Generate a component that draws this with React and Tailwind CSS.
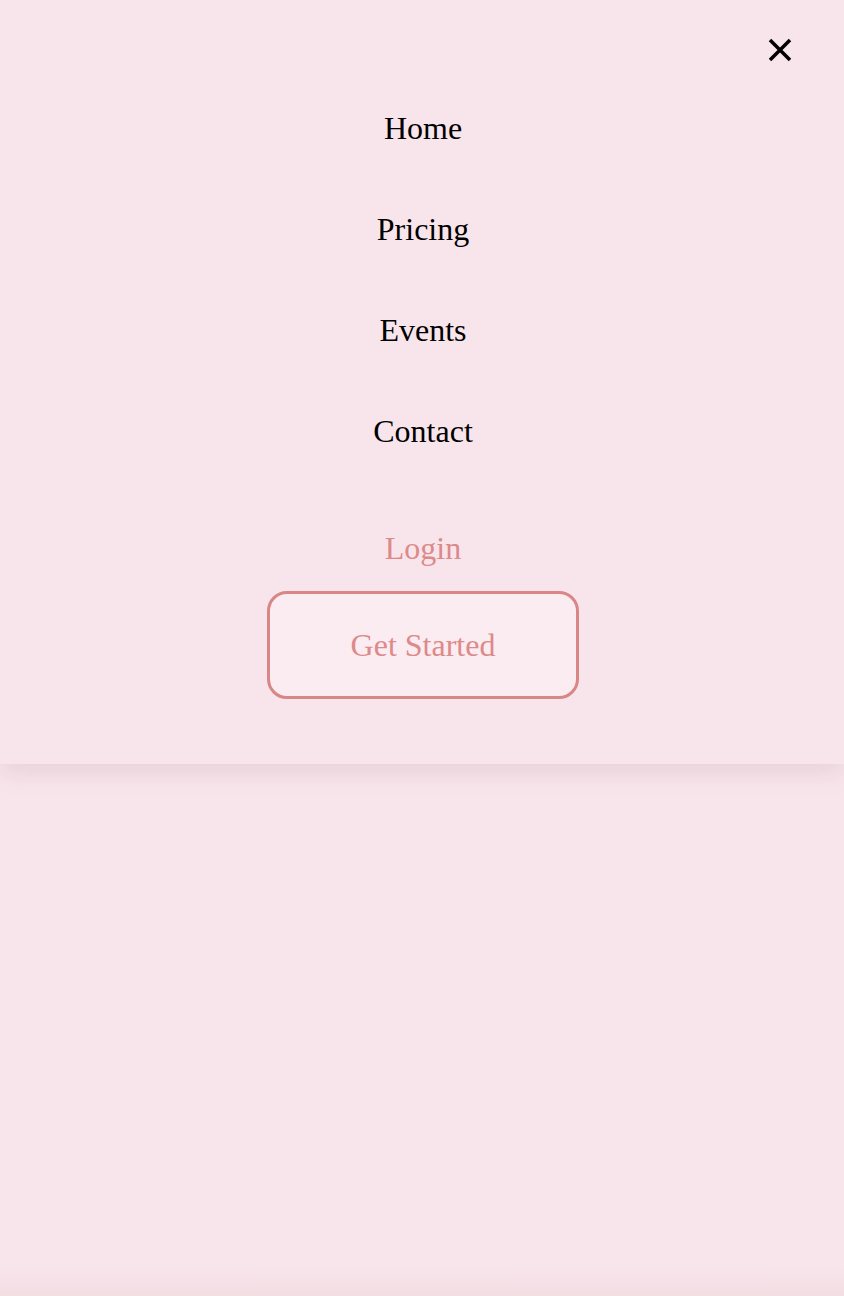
import { useState } from "react";

const links = ["Home", "Pricing", "Events", "Contact"];

const CloseIcon = () => (
    <svg width="24" height="24" viewBox="0 0 24 24" fill="none" stroke="#000" strokeWidth="3.5" strokeLinecap="butt">
        <path d="M2 2 L22 22 M22 2 L2 22" />
    </svg>
);

const App = () => {
    const [open, setOpen] = useState(true);

    return (
        <div className="h-[1296px] flex flex-col bg-[#f8e5eb]" style={{ fontFamily: '"Liberation Serif", "Times New Roman", serif' }}>
            <div className="relative bg-[#f8e5eb] shadow-[0_8px_24px_rgba(120,60,80,0.12)] pt-[104px] pb-[65px] pl-[2px] z-10">
                <button onClick={() => setOpen(!open)} className="absolute top-[38px] right-[52px] cursor-pointer">
                    <CloseIcon />
                </button>
                <ul className="flex flex-col items-center gap-[53px]">
                    {links.map((link) => (
                        <li key={link} className="text-[32px] leading-[48px] text-black">
                            {link}
                        </li>
                    ))}
                </ul>
                <div className="flex flex-col items-center mt-[69px]">
                    <a className="text-[32px] leading-[48px] text-[#dc8a8a]">Login</a>
                    <button className="mt-[19px] w-[312px] h-[108px] rounded-[20px] border-[3px] border-[#d98686] bg-[#fbecf1] text-[32px] text-[#dc8a8a]">
                        Get Started
                    </button>
                </div>
            </div>
            <div className="flex-1" />
            <div className="h-[30px] bg-linear-to-b from-[#f8e5eb] to-[#f2dde3]" />
        </div>
    );
};

export default App;
